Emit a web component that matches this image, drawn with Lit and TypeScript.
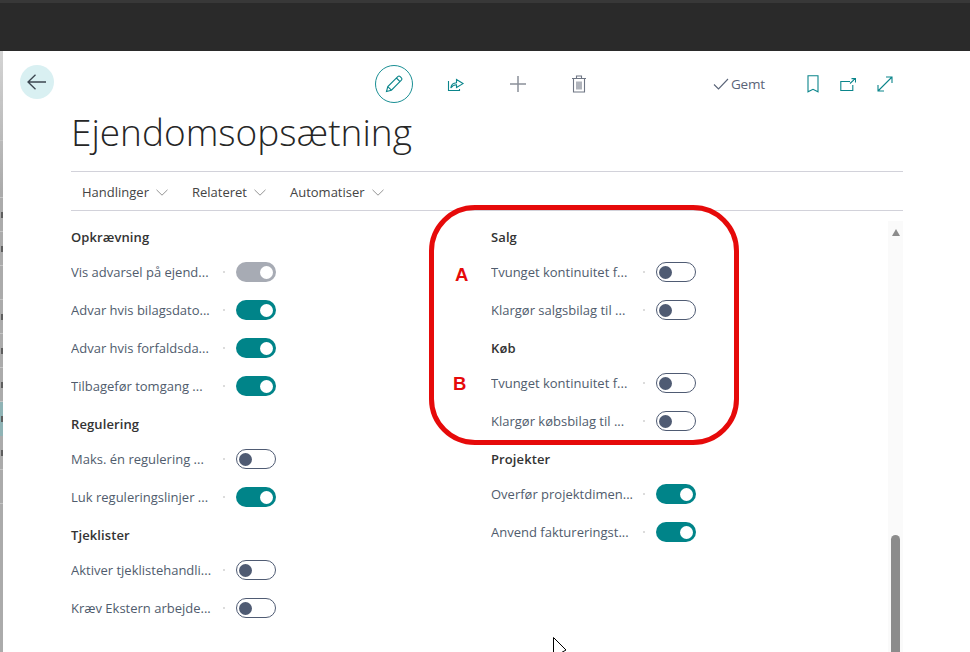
import { LitElement, html, css, svg } from "lit";
import { customElement } from "lit/decorators.js";

type Row = { label: string; state: "on" | "off" | "dis" };
type Group = { title: string; rows: Row[] };

const left: Group[] = [
  { title: "Opkrævning", rows: [
    { label: "Vis advarsel på ejend...", state: "dis" },
    { label: "Advar hvis bilagsdato...", state: "on" },
    { label: "Advar hvis forfaldsda...", state: "on" },
    { label: "Tilbagefør tomgang ...", state: "on" },
  ]},
  { title: "Regulering", rows: [
    { label: "Maks. én regulering ...", state: "off" },
    { label: "Luk reguleringslinjer ...", state: "on" },
  ]},
  { title: "Tjeklister", rows: [
    { label: "Aktiver tjeklistehandli...", state: "off" },
    { label: "Kræv Ekstern arbejde...", state: "off" },
  ]},
];
const right: Group[] = [
  { title: "Salg", rows: [
    { label: "Tvunget kontinuitet f...", state: "off" },
    { label: "Klargør salgsbilag til ...", state: "off" },
  ]},
  { title: "Køb", rows: [
    { label: "Tvunget kontinuitet f...", state: "off" },
    { label: "Klargør købsbilag til ...", state: "off" },
  ]},
  { title: "Projekter", rows: [
    { label: "Overfør projektdimen...", state: "on" },
    { label: "Anvend faktureringst...", state: "on" },
  ]},
];

const icon = (w: number, h: number, body: unknown) => html`<svg width=${w} height=${h} viewBox="0 0 ${w} ${h}" fill="none" stroke="currentColor" stroke-width="1.1">${body}</svg>`;

const chevron = icon(12, 7, svg`<path d="M.5 .8 6 6.2 11.5 .8" stroke-width="0.9"/>`);

@customElement("app-root")
export class AppRoot extends LitElement {
  static styles = css`
    :host { display: block; width: 970px; height: 652px; overflow: hidden; position: relative; background: #fff;
      font-family: "Open Sans", "Noto Sans", sans-serif; }
    .top { height: 51px; background: #2a2a2a; border-top: 3px solid #383838; box-sizing: border-box; }
    .body { display: flex; height: 601px; }
    .strip { width: 3px; flex: none; display: flex; flex-direction: column; background: linear-gradient(#d4d4d4, #ababab 140px, #ababab); }
    .strip div { flex: none; border-bottom: 1px solid #c4c4c4; box-sizing: border-box; display: flex; justify-content: flex-end; align-items: center; }
    .strip i { display: block; width: 2px; height: 6px; background: #5e5e5e; }
    .strip .a { height: 50px; } .strip .b { height: 40px; } .strip .c { height: 57px; } .strip .d { height: 34px; }
    .strip .t { height: 34px; background: #8fb3b5; border-bottom: none; }
    .panel { flex: 1; min-width: 0; display: flex; flex-direction: column; }
    .bar { display: flex; align-items: center; height: 38px; margin-top: 14px; padding-left: 17px; }
    .back { width: 34px; height: 34px; border-radius: 50%; background: #d9f0f2; color: #3c4650; display: flex; align-items: center; justify-content: center; margin-right: 321px; align-self: flex-start; flex: none; }
    .edit { width: 38px; height: 38px; margin: 0 25px 0 0; box-sizing: border-box; border: 1.5px solid #1a8f94; border-radius: 50%; color: #0b858b; display: flex; align-items: center; justify-content: center; flex: none; }
    .ib { width: 34px; height: 34px; flex: none; display: flex; align-items: center; justify-content: center; color: #0b858b; }
    .ib.plus { margin-left: 29px; color: #8b9099; }
    .ib.trash { margin-left: 27px; color: #6f7684; }
    .ib.m1 { margin-left: 1px; }
    .ib.m3 { margin-left: 3px; }
    .saved { display: flex; align-items: center; margin-left: 117px; width: 83px; color: #5a6478; font-size: 13.5px; gap: 2px; flex: none; }
    .saved span { letter-spacing: -0.2px; }
    .title { margin: 0 0 0 68px; font-weight: 300; font-size: 37px; line-height: 50px; height: 68px; color: #262626; white-space: nowrap; box-sizing: border-box; padding-top: 4px; }
    .menu { margin: 0 67px 0 68px; border-top: 1px solid #d2d2da; border-bottom: 1px solid #d2d2da; height: 40px; box-sizing: border-box; display: flex; align-items: center; padding: 1px 0 0 11px; color: #444; font-size: 13px; }
    .mi { display: flex; align-items: center; gap: 7px; margin-right: 24px; }
    .mi svg { color: #888; margin-top: 1px; }
    .content { flex: 1; min-height: 0; display: flex; margin: 7px 67px 0 68px; }
    .col { width: 420px; flex: none; }
    .col.r { width: 397px; }
    .head { height: 35px; box-sizing: border-box; padding-top: 11px; line-height: 16px; font-size: 13px; font-weight: 600; color: #333; letter-spacing: 0.1px; }
    .row { height: 38px; display: flex; align-items: center; }
    .label { width: 152px; flex: none; font-size: 13px; color: #505c6d; white-space: nowrap; overflow: hidden; }
    .dot { width: 2px; height: 2px; background: #dcdcdc; margin-right: 11px; flex: none; }
    .tg { width: 40px; height: 20px; border-radius: 10px; box-sizing: border-box; flex: none; display: flex; align-items: center; padding: 0 3px; }
    .tg i { display: block; width: 13px; height: 13px; border-radius: 50%; }
    .tg.off { border: 1px solid #4f5b73; padding: 0 2px; background: #fff; }
    .tg.off i { background: #4f5b73; }
    .tg.on { background: #008489; justify-content: flex-end; }
    .tg.dis { background: #a7abb4; justify-content: flex-end; }
    .tg.on i, .tg.dis i { background: #fff; }
    .track { width: 15px; flex: none; margin-top: 3px; background: #fafafa; display: flex; flex-direction: column; align-items: center; overflow: hidden; }
    .arrow { width: 0; height: 0; border-left: 4.5px solid transparent; border-right: 4.5px solid transparent; border-bottom: 7px solid #8c8c8c; margin-top: 8px; }
    .thumb { width: 9px; height: 130px; flex: none; border-radius: 4.5px; background: #8c8c8c; margin-top: 299px; }
    .ring { position: absolute; left: 429px; top: 205px; width: 310px; height: 240px; box-sizing: border-box; border: 5px solid #e60a0a; border-radius: 46px; pointer-events: none; }
    .mark { position: absolute; font-family: "Liberation Sans", Arial, sans-serif; font-weight: 700; font-size: 18.5px; line-height: 20px; color: #e60a0a; }
    .mark.a { left: 455px; top: 265px; }
    .mark.b { left: 453px; top: 374px; }
    .cursor { position: absolute; left: 553px; top: 637px; }
  `;

  private group(g: Group) {
    return html`<div class="head">${g.title}</div>${g.rows.map(r => html`
      <div class="row"><div class="label">${r.label}</div><div class="dot"></div><div class="tg ${r.state}"><i></i></div></div>`)}`;
  }

  render() {
    return html`
      <div class="top"></div>
      <div class="body">
        <div class="strip">
          <div class="a"></div><div class="b"></div><div class="c"></div><div class="d"><i></i></div><div class="d"><i></i></div>
          <div class="d"></div><div class="d"><i></i></div><div class="d"><i></i></div><div class="d"><i></i></div><div class="t"><i></i></div><div class="d"><i></i></div><div class="d"></div>
        </div>
        <div class="panel">
          <div class="bar">
            <div class="back">${icon(20, 16, svg`<path d="M1 8h18M8.5 .8 1 8l7.5 7.2" stroke-width="1.3"/>`)}</div>
            <div class="edit">${icon(20, 20, svg`<path d="M2.5 17.5 3.8 12.6 13.8 2.6a1.7 1.7 0 0 1 2.4 0l1.2 1.2a1.7 1.7 0 0 1 0 2.4L7.4 16.2zM3.8 12.6l3.6 3.6M12.4 4l3.6 3.6"/>`)}</div>
            <div class="ib">${icon(20, 20, svg`<path d="M3.5 7v9.5h11V15M5.8 14c.4-3 2.5-5 5.7-5.2V5.6L18 9.6l-6.5 3.9v-2.8c-2.3 0-4.2 1-5.7 3.3z"/>`)}</div>
            <div class="ib plus">${icon(18, 18, svg`<path d="M9 1v16M1 9h16" stroke-width="1.5"/>`)}</div>
            <div class="ib trash">${icon(14, 18, svg`<path d="M0 3.5h14M4.5 3.5V1h5v2.5M1.5 3.5v13.5h11V3.5M5 6.5v8M7 6.5v8M9 6.5v8"/>`)}</div>
            <div class="saved">${icon(16, 12, svg`<path d="M1 6.5 5.5 11 15 1"/>`)}<span>Gemt</span></div>
            <div class="ib">${icon(12, 18, svg`<path d="M1 .8h10v16l-5-2.5-5 2.5z"/>`)}</div>
            <div class="ib m1">${icon(16, 13, svg`<path d="M10 3.5H.8v9h12V7M10 5.5 15 .8M11.5 .6h4V4.5"/>`)}</div>
            <div class="ib m3">${icon(16, 16, svg`<path d="M1 15 15 1M9 1h6v6M1 9v6h6"/>`)}</div>
          </div>
          <h1 class="title">Ejendomsopsætning</h1>
          <div class="menu">
            <div class="mi">Handlinger ${chevron}</div>
            <div class="mi">Relateret ${chevron}</div>
            <div class="mi">Automatiser ${chevron}</div>
          </div>
          <div class="content">
            <div class="col">${left.map(g => this.group(g))}</div>
            <div class="col r">${right.map(g => this.group(g))}</div>
            <div class="track"><div class="arrow"></div><div class="thumb"></div></div>
          </div>
        </div>
      </div>
      <div class="ring"></div>
      <div class="mark a">A</div>
      <div class="mark b">B</div>
      <svg class="cursor" width="14" height="16" viewBox="0 0 14 16"><path d="M.5 .5V20L13 13z" fill="#fff" stroke="#000"/></svg>
    `;
  }
}
